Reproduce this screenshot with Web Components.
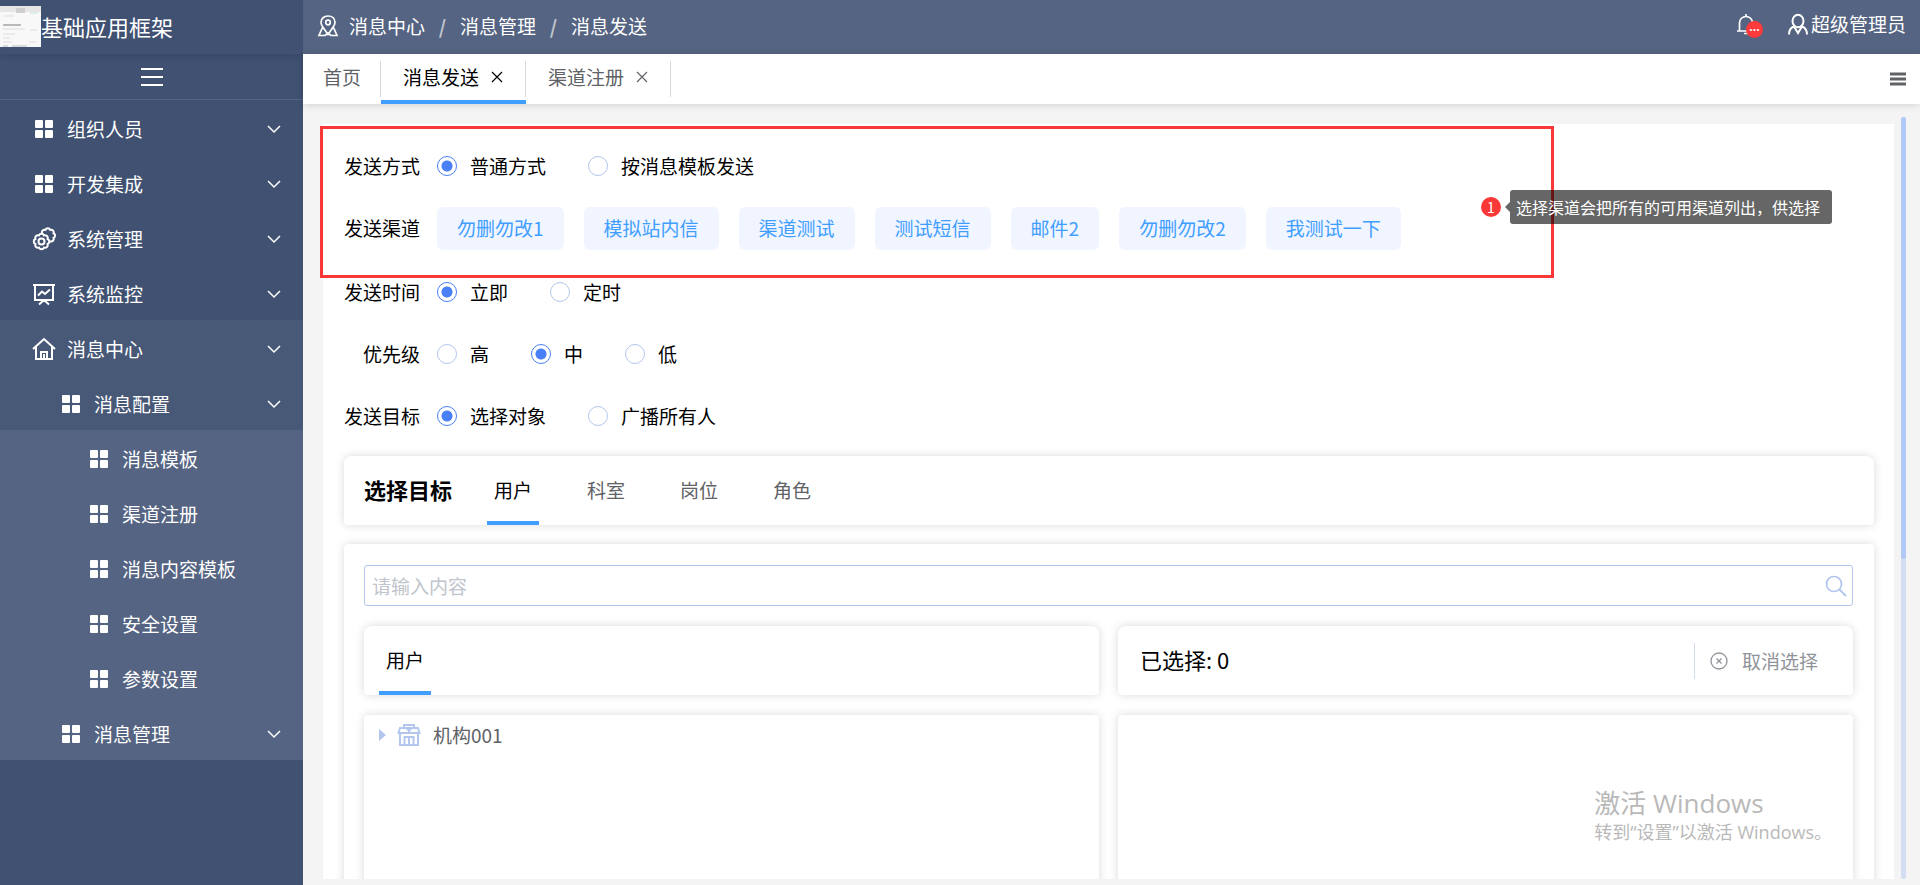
<!DOCTYPE html>
<html lang="zh-CN">
<head>
<meta charset="utf-8">
<title>基础应用框架 - 消息发送</title>
<style>
  html, body { margin: 0; height: 100%; }
  body {
    font-family: "Noto Sans CJK SC", sans-serif;
    font-size: 19px;
    line-height: 28px;
    color: #000;
    background: #f4f4f4;
    overflow: hidden;
  }
</style>
</head>
<body>
<message-app></message-app>

<script>
/* Scalloped gear outline: n outward arcs round a circle of radius r. */
function gear(cx, cy, r, n) {
  const p = i => {
    const a = i * 2 * Math.PI / n - Math.PI / n;
    return (cx + r * Math.cos(a)).toFixed(2) + ' ' + (cy + r * Math.sin(a)).toFixed(2);
  };
  const bump = (r * 0.42).toFixed(2);
  let d = 'M' + p(0);
  for (let i = 1; i <= n; i++) d += `A${bump} ${bump} 0 0 1 ${p(i)}`;
  return d + 'Z';
}

const ICONS = {
  grid: [24, '<g fill="currentColor"><rect x="3" y="3" width="8" height="8" rx="1"/><rect x="13" y="3" width="8" height="8" rx="1"/><rect x="3" y="13" width="8" height="8" rx="1"/><rect x="13" y="13" width="8" height="8" rx="1"/></g>'],
  gears: [24, `<mask id="m"><rect width="24" height="24" fill="#fff"/><circle cx="9.500" cy="14.500" r="8.800" fill="#000"/></mask>
    <path d="${gear(15.8, 8.6, 6.2, 8)}" mask="url(#m)"/><path d="${gear(9.5, 14.5, 6.6, 8)}"/><circle cx="9.500" cy="14.500" r="3"/>`],
  board: [24, '<path d="M1 3H23M3 3V18H21V3M6 13.500L10 9.500L13 12L18 7.500M12 18V20M12 18L7 22.500M12 18L17 22.500"/>'],
  home: [24, '<path d="M1 12L12 2L23 12M4 10V22H20V10M9 22V15H15V22M12 17V22"/>'],
  chevron: [14, '<path d="M1 4L7 10L13 4" stroke-width="1.500"/>'],
  menu: [24, '<path d="M1 4H23M1 12H23M1 20H23"/>'],
  location: [22, '<path d="M11 19.500L6.500 13C4.500 10.500 4 9 4 7.500C4 3.500 7 1 11 1S18 3.500 18 7.500C18 9 17.500 10.500 15.500 13ZM5.500 12.500L2 20.500H8L11 18L14 20.500H20L16.500 12.500" stroke-width="1.700"/><circle cx="11" cy="7.500" r="2.300" stroke-width="1.700"/>'],
  bell: [22, '<path d="M2 18H20M4.500 18V10C4.500 6 7.500 3.500 11 3.500S17.500 6 17.500 10V18M11 1V3M9 20.500H13" stroke-width="1.700"/>'],
  user: [22, '<ellipse cx="11" cy="8" rx="5.500" ry="6.300"/><path d="M2 21.500C2 17 4 14.500 7 13.500L11 20L15 13.500C18 14.500 20 17 20 21.500"/>'],
  close: [12, '<path d="M1 1L11 11M11 1L1 11" stroke-width="1.200"/>'],
  search: [22, '<circle cx="9" cy="9" r="7.500" stroke-width="1.700"/><path d="M14.500 14.500L21 21"/>'],
  cancel: [18, '<circle cx="9" cy="9" r="8" stroke-width="1.300"/><path d="M6.500 6.500L11.500 11.500M11.500 6.500L6.500 11.500" stroke-width="1.300"/>'],
  building: [24, '<path d="M7 6V2H17V6M3 5H21L22.500 10H1.500ZM3 10V22H21V10M7.500 22V14H16.500V22M12 14V22M12 4V9M9.500 6.500H14.500"/>']
};

function define(tag, css, html, setup) {
  const template = document.createElement('template');
  customElements.define(tag, class extends HTMLElement {
    connectedCallback() {
      if (this.shadowRoot) return;
      template.innerHTML = `<style>*{box-sizing:border-box}button,input{font:inherit;color:inherit}button{border:0;padding:0;background:none;cursor:pointer;white-space:nowrap}${css}</style>` +
        (typeof html === 'function' ? html(this) : html);
      this.attachShadow({ mode: 'open' }).append(template.content.cloneNode(true));
      if (setup) setup(this, this.shadowRoot);
    }
  });
}

define('ui-icon',
  `:host{display:block;flex:none;width:24px;height:24px}
   svg{display:block;width:100%;height:100%;fill:none;stroke:currentColor;stroke-width:2}
   rect{stroke:none}`,
  el => {
    const [size, body] = ICONS[el.getAttribute('name')];
    return `<svg viewBox="0 0 ${size} ${size}" aria-hidden="true">${body}</svg>`;
  });

/* ---------- sidebar ---------- */
define('nav-item',
  `:host{display:block}
   a{display:flex;align-items:center;gap:11px;height:55px;padding:3px 22px 0 32px;color:#fff;text-decoration:none}
   :host([level="2"]) a{padding-left:59px}
   :host([level="3"]) a{padding-left:87px}
   span{flex:1}
   .arrow{width:14px;height:14px}`,
  el => `<a href="#"><ui-icon name="${el.getAttribute('icon') || 'grid'}"></ui-icon><span><slot></slot></span>
    ${el.hasAttribute('expandable') ? '<ui-icon class="arrow" name="chevron"></ui-icon>' : ''}</a>`);

define('app-sidebar',
  `:host{display:block;width:303px;flex:none;background:#405172;color:#fff}
   .brand{display:flex;align-items:center;height:54px;padding-bottom:2px;font-size:22px;box-shadow:0 0 8px rgba(20,30,60,.3)}
   .logo{width:41px;height:41px;display:block}
   .toggle{display:flex;width:100%;height:46px;align-items:center;justify-content:center;border-bottom:1px solid #556482}
   .open{background:#485877}
   .deep{background:#556482}`,
  `<div class="brand">
     <svg class="logo" viewBox="0 0 41 41" aria-hidden="true"><rect width="41" height="41" fill="#f8f8f8"/>
       <rect width="41" height="6" fill="#e6e6e6"/><rect x="16" y="2" width="9" height="5" fill="#cfcfcf"/><rect x="30" y="6" width="8" height="2" fill="#dcefe4"/>
       <path d="M3 10H14M4 19H21M3 23H25M3 28H15M3 32H10M30 24H37M29 36H36M3 36H12" stroke="#ddd"/><path d="M3 19H21" stroke="#888"/><path d="M3 40H8M12 40H27" stroke="#bbb"/></svg>
     <span>基础应用框架</span>
   </div>
   <button class="toggle" aria-label="折叠菜单"><ui-icon name="menu"></ui-icon></button>
   <nav>
     <nav-item expandable>组织人员</nav-item>
     <nav-item expandable>开发集成</nav-item>
     <nav-item icon="gears" expandable>系统管理</nav-item>
     <nav-item icon="board" expandable>系统监控</nav-item>
     <div class="open">
       <nav-item icon="home" expandable>消息中心</nav-item>
       <nav-item level="2" expandable>消息配置</nav-item>
       <div class="deep">
         <nav-item level="3">消息模板</nav-item>
         <nav-item level="3">渠道注册</nav-item>
         <nav-item level="3">消息内容模板</nav-item>
         <nav-item level="3">安全设置</nav-item>
         <nav-item level="3">参数设置</nav-item>
         <nav-item level="2" expandable>消息管理</nav-item>
       </div>
     </div>
   </nav>`);

/* ---------- header and page tabs ---------- */
define('app-header',
  `:host{display:flex;align-items:center;justify-content:space-between;height:54px;flex:none;padding:0 14px;background:#556482;color:#fff}
   nav,.right,.user{display:flex;align-items:center}
   nav{gap:12px;padding-bottom:3px}
   nav ui-icon,.right ui-icon{width:22px;height:22px}
   nav ui-icon{margin-right:-2px}
   nav a{color:#fff;text-decoration:none}
   .sep{color:#c0c4cc;width:11px;text-align:center;font-weight:700}
   .right{gap:30px;padding-bottom:6px}
   .user{gap:2px}
   .bell{position:relative;display:block}
   .badge{position:absolute;left:11px;top:8px;width:17px;height:17px;border-radius:50%;background:#ff3a3a;font-size:12px;line-height:12px;font-weight:700;text-align:center;font-family:"Open Sans",sans-serif}`,
  `<nav aria-label="当前位置"><ui-icon name="location"></ui-icon><a href="#">消息中心</a><span class="sep">/</span><a href="#">消息管理</a><span class="sep">/</span><a href="#">消息发送</a></nav>
   <div class="right">
     <button class="bell" aria-label="通知"><ui-icon name="bell"></ui-icon><span class="badge">...</span></button>
     <button class="user"><ui-icon name="user"></ui-icon>超级管理员</button>
   </div>`);

define('page-tab',
  `:host{display:flex;box-sizing:border-box;align-items:center;position:relative;height:50px;color:#606266;padding:0 20px 4px;gap:8px}
   :host::before{content:"";position:absolute;right:0;top:7px;height:36px;width:1px;background:#d8d8d8}
   :host([closable]){padding-left:22px;padding-right:22px}
   :host([active]){color:#000;border-bottom:4px solid #409eff;padding-bottom:0}
   .close{width:12px;height:12px;margin:0 1px 0 4px}
   .close ui-icon{width:12px;height:12px}`,
  el => `<button><slot></slot></button>${el.hasAttribute('closable') ? '<button class="close" aria-label="关闭"><ui-icon name="close"></ui-icon></button>' : ''}`);

define('page-tabs',
  `:host{display:flex;align-items:center;height:50px;flex:none;background:#fff;box-shadow:0 1px 8px rgba(0,0,0,.14);position:relative}
   .tabs{display:flex;flex:1}
   .all{margin-right:14px;color:#606266}
   .all svg{display:block;width:16px;height:16px;stroke:currentColor;stroke-width:3}`,
  `<div class="tabs"><page-tab>首页</page-tab><page-tab active closable>消息发送</page-tab><page-tab closable>渠道注册</page-tab></div>
   <button class="all" aria-label="标签菜单"><svg viewBox="0 0 16 16"><path d="M0 3H16M0 8H16M0 13H16"/></svg></button>`);

/* ---------- form ---------- */
define('form-row',
  `:host{display:flex;align-items:center;height:62px;padding-left:21px}
   .label{width:76px;text-align:right;margin-right:17px;flex:none}`,
  el => `<div class="label">${el.getAttribute('label')}</div><slot></slot>`);

define('radio-group',
  `:host{display:block}
   div{display:flex;gap:42px}
   label{display:flex;align-items:center;gap:13px;cursor:pointer}
   input{appearance:none;margin:0;width:20px;height:20px;border:1px solid #b3c7ee;border-radius:50%;background:#fff}
   input:checked{border-color:#4a80f5;background:radial-gradient(circle,#4a80f5 0 5px,#fff 6px)}`,
  el => `<div role="radiogroup" aria-label="${el.getAttribute('label')}">` + el.getAttribute('options').split(',').map((t, i) =>
    `<label><input type="radio" name="choice"${i === +el.getAttribute('value') ? ' checked' : ''}>${t}</label>`).join('') + '</div>');

define('channel-list',
  `:host{display:flex;gap:20px}
   button{height:43px;padding:0 20px 1px;border-radius:6px;background:#f0f5ff;color:#409eff}`,
  el => el.getAttribute('channels').split(',').map(t => `<button>${t}</button>`).join(''));

/* ---------- target picker ---------- */
define('card-bar',
  `:host{display:flex;align-items:center;background:#fff;border-radius:8px 8px 4px 4px;box-shadow:0 0 10px rgba(0,0,0,.15);height:69px;padding:0 20px}`,
  `<slot></slot>`);

define('tab-strip',
  `:host{display:flex;align-self:stretch;gap:41px;margin-left:-5px;color:#606266}
   :host([after-title]){margin-left:35px}
   button{width:52px;padding-top:2px;padding-bottom:4px}
   button[aria-selected=true]{border-bottom:4px solid #409eff;color:#000;padding-bottom:0}`,
  el => el.getAttribute('tabs').split(',').map((t, i) => `<button role="tab" aria-selected="${i === 0}">${t}</button>`).join(''));

define('search-box',
  `:host{display:flex;align-items:center;height:41px;border:1px solid #b3c7ee;border-radius:3px;padding:0 5px 0 7px}
   input{flex:1;min-width:0;height:100%;border:0;outline:0;background:none;padding:0}
   input::placeholder{color:#c0c4cc;opacity:1}
   button{color:#b3c7ee}
   ui-icon{width:22px;height:22px}`,
  `<input type="text" placeholder="请输入内容" aria-label="请输入内容"><button aria-label="搜索"><ui-icon name="search"></ui-icon></button>`);

define('tree-node',
  `:host{display:flex;align-items:center;height:38px;margin-left:15px;padding-top:2px;color:#606266}
   .caret{width:7px;height:12px;background:#b3c7ee;clip-path:polygon(0 0,100% 50%,0 100%);margin-right:11px}
   ui-icon{color:#b3c7ee;margin-right:12px}`,
  `<button class="caret" aria-label="展开"></button><ui-icon name="building"></ui-icon><span><slot></slot></span>`);

define('target-picker',
  `:host{display:block;margin:9px 20px 0 21px}
   h2{margin:0;padding-bottom:4px;font-size:22px;line-height:32px;font-weight:700}
   .panel,.list{background:#fff;border-radius:4px;box-shadow:0 0 10px rgba(0,0,0,.15)}
   .panel{margin-top:19px;padding:21px 21px 20px 20px}
   .cols{display:grid;grid-template-columns:1fr 1fr;column-gap:19px;row-gap:20px;margin-top:20px}
   .list{height:300px}
   .count{flex:1;font-size:22px;padding:0 0 4px 2px}
   .clear{display:flex;align-items:center;gap:14px;height:36px;padding:0 15px 0 15px;border-left:1px solid #d3dcea;color:#909399}
   .clear ui-icon{width:18px;height:18px}`,
  `<card-bar><h2>选择目标</h2><tab-strip after-title tabs="用户,科室,岗位,角色"></tab-strip></card-bar>
   <div class="panel">
     <search-box></search-box>
     <div class="cols">
       <card-bar><tab-strip tabs="用户"></tab-strip></card-bar>
       <card-bar><span class="count">已选择: 0</span><button class="clear"><ui-icon name="cancel"></ui-icon>取消选择</button></card-bar>
       <div class="list"><tree-node>机构001</tree-node></div>
       <div class="list"></div>
     </div>
   </div>`);

/* ---------- overlays ---------- */
define('note-callout',
  `:host{display:flex;align-items:center;gap:9px;color:#fff;font-size:16px}
   .no{width:20px;height:20px;border-radius:50%;background:#fa3838;font-size:14px;line-height:20px;text-align:center}
   .tip{position:relative;height:34px;line-height:34px;padding:0 12px 0 6px;border-radius:3px;background:rgba(0,0,0,.6);white-space:nowrap}
   .tip::before{content:"";position:absolute;right:100%;top:12px;border:solid transparent;border-width:5px 5px 5px 0;border-right-color:rgba(0,0,0,.6)}`,
  `<span class="no">1</span><span class="tip"><slot></slot></span>`);

define('os-watermark',
  `:host{display:block;color:#b9b9b9;font:18px/26px "Open Sans","Noto Sans CJK SC",sans-serif;white-space:nowrap;pointer-events:none}
   .big{font-size:26px;line-height:32px}`,
  `<div class="big">激活 Windows</div><div>转到“设置”以激活 Windows。</div>`);

define('message-form',
  `:host{display:block;position:relative;background:#fff;padding-top:11px}
   .wide{height:64px;padding-bottom:2px;box-sizing:border-box}
   .frame{position:absolute;left:-3px;right:340px;top:2px;height:152px;border:3px solid #fa3838;pointer-events:none}
   note-callout{position:absolute;right:62px;top:66px}`,
  `<form-row label="发送方式"><radio-group label="发送方式" options="普通方式,按消息模板发送" value="0"></radio-group></form-row>
   <form-row class="wide" label="发送渠道"><channel-list channels="勿删勿改1,模拟站内信,渠道测试,测试短信,邮件2,勿删勿改2,我测试一下"></channel-list></form-row>
   <form-row label="发送时间"><radio-group label="发送时间" options="立即,定时" value="0"></radio-group></form-row>
   <form-row label="优先级"><radio-group label="优先级" options="高,中,低" value="1"></radio-group></form-row>
   <form-row label="发送目标"><radio-group label="发送目标" options="选择对象,广播所有人" value="0"></radio-group></form-row>
   <target-picker></target-picker>
   <div class="frame"></div>
   <note-callout>选择渠道会把所有的可用渠道列出，供选择</note-callout>`);

define('message-app',
  `:host{display:flex;height:100vh}
   main{flex:1;min-width:0;display:flex;flex-direction:column}
   .content{flex:1;min-height:0;display:flex;gap:7px;padding:13px 14px 6px 17px}
   .view{flex:1;min-width:0;overflow:hidden;padding:7px 0 0 3px}
   .track{width:5px;border-radius:3px;background:#d4def2}
   .thumb{height:58%;border-radius:3px;background:#b3c9f5}
   os-watermark{position:absolute;right:88px;bottom:40px}`,
  `<app-sidebar></app-sidebar>
   <main>
     <app-header></app-header>
     <page-tabs></page-tabs>
     <div class="content">
       <div class="view"><message-form></message-form></div>
       <div class="track"><div class="thumb"></div></div>
     </div>
   </main>
   <os-watermark></os-watermark>`);
</script>
</body>
</html>
